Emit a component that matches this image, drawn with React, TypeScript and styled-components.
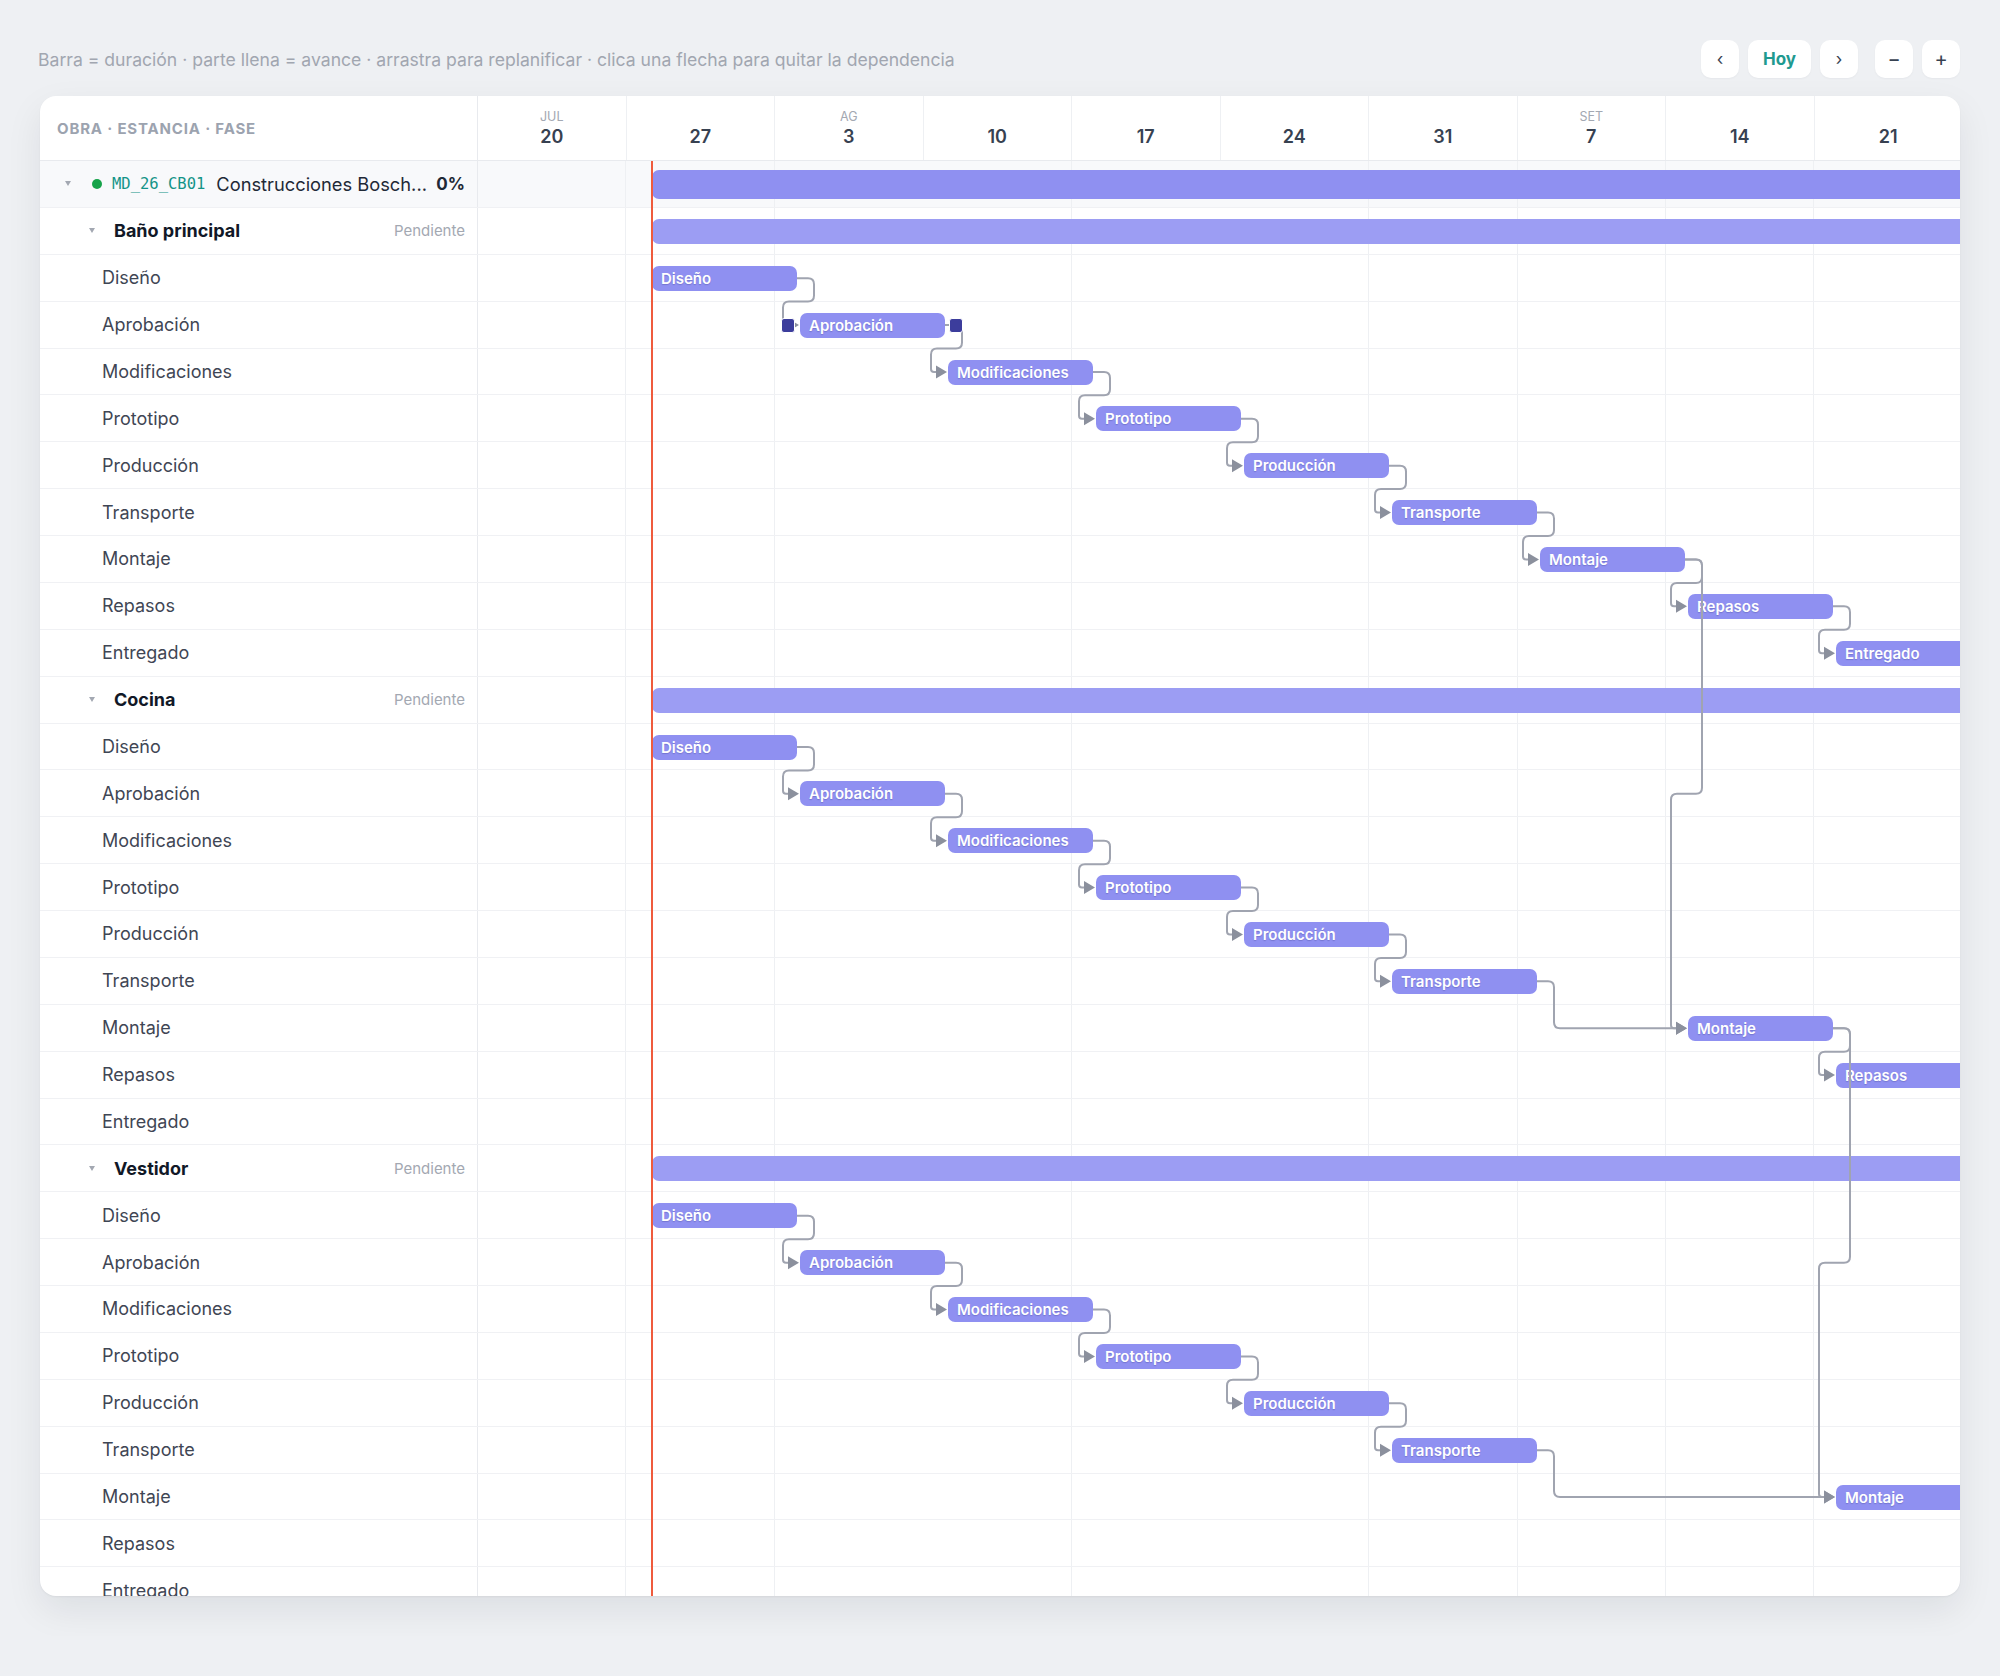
import React from "react";
import styled, { createGlobalStyle } from "styled-components";

const WEEK = 148.5;
const SLOT = 148;
const START = 174;
const BAR_W = 145;
const ROW_H = 46.88;
const LEFT_W = 438;
const CHART_W = 1482;
const TODAY_X = 172.7;

const PHASES = [
  "Diseño",
  "Aprobación",
  "Modificaciones",
  "Prototipo",
  "Producción",
  "Transporte",
  "Montaje",
  "Repasos",
  "Entregado",
];

const GROUPS = [
  { name: "Baño principal", slots: [0, 1, 2, 3, 4, 5, 6, 7, 8] },
  { name: "Cocina", slots: [0, 1, 2, 3, 4, 5, 7, 8, 9] },
  { name: "Vestidor", slots: [0, 1, 2, 3, 4, 5, 8, 9, 10] },
];

const WEEKS = [
  { month: "JUL", day: 20 },
  { day: 27 },
  { month: "AG", day: 3 },
  { day: 10 },
  { day: 17 },
  { day: 24 },
  { day: 31 },
  { month: "SET", day: 7 },
  { day: 14 },
  { day: 21 },
];

// row index of a phase inside the flat list (project row = 0)
const rowOf = (g: number, p: number) => 1 + g * 10 + 1 + p;
const centerY = (row: number) => row * ROW_H + 23.4;
const barLeft = (g: number, p: number) => START + GROUPS[g].slots[p] * SLOT;

type Link = [number, number, number, number];

const LINKS: Link[] = [];
GROUPS.forEach((_, g) => {
  for (let p = 0; p < PHASES.length - 1; p++) LINKS.push([g, p, g, p + 1]);
});
LINKS.push([0, 6, 1, 6]);
LINKS.push([1, 6, 2, 6]);

function roundedPath(pts: [number, number][], r = 6) {
  let d = `M ${pts[0][0]} ${pts[0][1]}`;
  for (let i = 1; i < pts.length - 1; i++) {
    const [px, py] = pts[i - 1];
    const [cx, cy] = pts[i];
    const [nx, ny] = pts[i + 1];
    const d1 = Math.hypot(cx - px, cy - py) || 1;
    const d2 = Math.hypot(nx - cx, ny - cy) || 1;
    const rr = Math.min(r, d1 / 2, d2 / 2);
    const ax = cx + ((px - cx) / d1) * rr;
    const ay = cy + ((py - cy) / d1) * rr;
    const bx = cx + ((nx - cx) / d2) * rr;
    const by = cy + ((ny - cy) / d2) * rr;
    d += ` L ${ax} ${ay} Q ${cx} ${cy} ${bx} ${by}`;
  }
  const last = pts[pts.length - 1];
  return d + ` L ${last[0]} ${last[1]}`;
}

function linkGeometry([sg, sp, tg, tp]: Link) {
  const x1 = barLeft(sg, sp) + BAR_W;
  const y1 = centerY(rowOf(sg, sp));
  const x2 = barLeft(tg, tp);
  const y2 = centerY(rowOf(tg, tp));
  const ex = x1 + 17;
  let pts: [number, number][];
  if (x2 - 17 >= ex) {
    pts = [[x1, y1], [ex, y1], [ex, y2], [x2 - 11, y2]];
  } else {
    const mid = (y1 + y2) / 2;
    pts = [[x1, y1], [ex, y1], [ex, mid], [x2 - 17, mid], [x2 - 17, y2], [x2 - 11, y2]];
  }
  return { d: roundedPath(pts), x2, y2 };
}

const GlobalStyle = createGlobalStyle`
  * { box-sizing: border-box; }
  body {
    margin: 0;
    background: #eef0f3;
    font-family: "Inter", "Noto Sans", sans-serif;
    color: #1f2937;
  }
`;

const Page = styled.div`
  padding: 40px 40px 40px;
`;

const TopBar = styled.div`
  display: flex;
  align-items: center;
  justify-content: space-between;
  height: 38px;
  margin-bottom: 18px;
`;

const Hint = styled.p`
  margin: 0 0 0 -2px;
  font-size: 17.6px;
  color: #a1a6b0;
`;

const Controls = styled.div`
  display: flex;
  gap: 17px;
`;

const ButtonGroup = styled.div`
  display: flex;
  gap: 9px;
`;

const NavButton = styled.button<{ $accent?: boolean; $small?: boolean }>`
  height: 38px;
  min-width: ${(p) => (p.$accent ? "63px" : "38px")};
  padding: 0;
  border: none;
  border-radius: 10px;
  background: #fff;
  box-shadow: 0 1px 2px rgba(16, 24, 40, 0.04);
  font-family: "Inter", sans-serif;
  font-size: ${(p) => (p.$accent ? "17px" : p.$small ? "17px" : "20px")};
  font-weight: ${(p) => (p.$accent ? 700 : 400)};
  color: ${(p) => (p.$accent ? "#1f9a90" : "#374151")};
  display: flex;
  align-items: center;
  justify-content: center;
`;

const Card = styled.div`
  width: 1920px;
  height: 1500px;
  background: #fff;
  border-radius: 16px;
  overflow: hidden;
  box-shadow: 0 1px 2px rgba(16, 24, 40, 0.05), 0 14px 36px rgba(16, 24, 40, 0.08);
  display: flex;
  flex-direction: column;
`;

const Header = styled.div`
  display: grid;
  grid-template-columns: ${LEFT_W}px 1fr;
  height: 65px;
  flex-shrink: 0;
  border-bottom: 1px solid #e8eaee;
`;

const HeaderTitle = styled.div`
  display: flex;
  align-items: center;
  padding-left: 17px;
  border-right: 1px solid #e8eaee;
  font-size: 15px;
  font-weight: 700;
  letter-spacing: 0.055em;
  color: #9ca3af;
`;

const WeekRow = styled.div`
  display: grid;
  grid-template-columns: repeat(10, ${WEEK}px);
  overflow: hidden;
`;

const WeekCell = styled.div`
  display: flex;
  flex-direction: column;
  align-items: center;
  justify-content: flex-end;
  padding-bottom: 12px;
  border-right: 1px solid #eef0f3;
`;

const Month = styled.span`
  font-size: 12.5px;
  line-height: 14px;
  color: #a3a8b2;
  margin-bottom: 2px;
`;

const Day = styled.span`
  font-size: 18px;
  line-height: 22px;
  font-weight: 600;
  color: #374151;
`;

const Body = styled.div`
  position: relative;
  flex: 1;
`;

const Row = styled.div<{ $tint?: boolean }>`
  display: grid;
  grid-template-columns: ${LEFT_W}px 1fr;
  height: ${ROW_H}px;
  border-bottom: 1px solid #f0f1f4;
  background: ${(p) => (p.$tint ? "#f8f9fb" : "transparent")};
`;

const Label = styled.div<{ $indent: number }>`
  display: flex;
  align-items: center;
  padding-left: ${(p) => p.$indent}px;
  padding-right: 12px;
  border-right: 1px solid #e8eaee;
  min-width: 0;
`;

const Track = styled.div`
  position: relative;
  background-image: repeating-linear-gradient(
    90deg,
    transparent 0,
    transparent ${WEEK - 1}px,
    #eef0f3 ${WEEK - 1}px,
    #eef0f3 ${WEEK}px
  );
`;

const Caret = styled.span`
  width: 0;
  height: 0;
  border-left: 3px solid transparent;
  border-right: 3px solid transparent;
  border-top: 5px solid #a3a8b2;
  flex-shrink: 0;
`;

const StatusDot = styled.span`
  width: 10px;
  height: 10px;
  border-radius: 50%;
  background: #16a34a;
  margin-left: 21px;
  flex-shrink: 0;
`;

const Code = styled.span`
  font-family: "DejaVu Sans Mono", "Liberation Mono", monospace;
  font-size: 15.5px;
  color: #149488;
  margin-left: 10px;
`;

const ProjectName = styled.span`
  flex: 1;
  margin-left: 11px;
  font-size: 18.3px;
  color: #1f2937;
  white-space: nowrap;
  overflow: hidden;
`;

const Percent = styled.span`
  font-size: 17px;
  font-weight: 700;
  color: #1f2937;
`;

const GroupName = styled.span`
  flex: 1;
  margin-left: 19px;
  font-size: 18px;
  font-weight: 700;
  color: #111827;
`;

const Status = styled.span`
  font-size: 15px;
  color: #a3a8b2;
`;

const PhaseName = styled.span`
  font-size: 18px;
  color: #3f4654;
`;

const Bar = styled.div<{ $kind: "project" | "group" | "phase" }>`
  position: absolute;
  top: ${(p) => (p.$kind === "project" ? 9 : 11)}px;
  height: ${(p) => (p.$kind === "project" ? 29 : 25)}px;
  border-radius: 7px;
  background: ${(p) => (p.$kind === "group" ? "#9c9df3" : "#8f90f1")};
  color: #fff;
  font-size: 15px;
  font-weight: 600;
  padding-left: 9px;
  display: flex;
  align-items: center;
  white-space: nowrap;
  overflow: hidden;
  text-shadow: 0 1px 1px rgba(40, 40, 110, 0.25);
`;

const Overlay = styled.div`
  position: absolute;
  top: 0;
  left: ${LEFT_W}px;
  width: ${CHART_W}px;
  height: 100%;
  pointer-events: none;
`;

const TodayLine = styled.div`
  position: absolute;
  top: 0;
  bottom: 0;
  left: ${TODAY_X}px;
  width: 2px;
  background: #ef5b3d;
`;

const Links = styled.svg`
  position: absolute;
  top: 0;
  left: 0;
`;

const Handle = styled.div`
  position: absolute;
  width: 14px;
  height: 15px;
  border-radius: 3px;
  background: #3c3d9c;
  border: 1.5px solid #fff;
`;

export default function App() {
  const totalRows = 1 + GROUPS.length * 10;
  const aprob = { left: barLeft(0, 1), top: rowOf(0, 1) * ROW_H + 16 };

  return (
    <>
      <GlobalStyle />
      <Page>
        <TopBar>
          <Hint>
            Barra = duración · parte llena = avance · arrastra para replanificar · clica una flecha para quitar la
            dependencia
          </Hint>
          <Controls>
            <ButtonGroup>
              <NavButton $small>‹</NavButton>
              <NavButton $accent>Hoy</NavButton>
              <NavButton $small>›</NavButton>
            </ButtonGroup>
            <ButtonGroup>
              <NavButton>−</NavButton>
              <NavButton>+</NavButton>
            </ButtonGroup>
          </Controls>
        </TopBar>

        <Card>
          <Header>
            <HeaderTitle>OBRA · ESTANCIA · FASE</HeaderTitle>
            <WeekRow>
              {WEEKS.map((w, i) => (
                <WeekCell key={i}>
                  {w.month && <Month>{w.month}</Month>}
                  <Day>{w.day}</Day>
                </WeekCell>
              ))}
            </WeekRow>
          </Header>

          <Body>
            <Row $tint>
              <Label $indent={25}>
                <Caret />
                <StatusDot />
                <Code>MD_26_CB01</Code>
                <ProjectName>Construcciones Bosch...</ProjectName>
                <Percent>0%</Percent>
              </Label>
              <Track>
                <Bar $kind="project" style={{ left: START, width: 2000 }} />
              </Track>
            </Row>

            {GROUPS.map((g, gi) => (
              <React.Fragment key={g.name}>
                <Row>
                  <Label $indent={49}>
                    <Caret />
                    <GroupName>{g.name}</GroupName>
                    <Status>Pendiente</Status>
                  </Label>
                  <Track>
                    <Bar $kind="group" style={{ left: START, width: 2000 }} />
                  </Track>
                </Row>
                {PHASES.map((name, pi) => (
                  <Row key={name}>
                    <Label $indent={62}>
                      <PhaseName>{name}</PhaseName>
                    </Label>
                    <Track>
                      <Bar $kind="phase" style={{ left: barLeft(gi, pi), width: BAR_W }}>
                        {name}
                      </Bar>
                    </Track>
                  </Row>
                ))}
              </React.Fragment>
            ))}

            <Overlay>
              <TodayLine />
              <Links width={CHART_W} height={totalRows * ROW_H}>
                {LINKS.map((l, i) => {
                  const { d, x2, y2 } = linkGeometry(l);
                  return (
                    <g key={i}>
                      <path d={d} fill="none" stroke="#a0a4b0" strokeWidth={2} />
                      <polygon
                        points={`${x2 - 12},${y2 - 6.5} ${x2 - 1},${y2} ${x2 - 12},${y2 + 6.5}`}
                        fill="#8b909d"
                      />
                    </g>
                  );
                })}
              </Links>
              <Handle style={{ left: aprob.left - 19, top: aprob.top }} />
              <Handle style={{ left: aprob.left + BAR_W + 4, top: aprob.top }} />
            </Overlay>
          </Body>
        </Card>
      </Page>
    </>
  );
}
